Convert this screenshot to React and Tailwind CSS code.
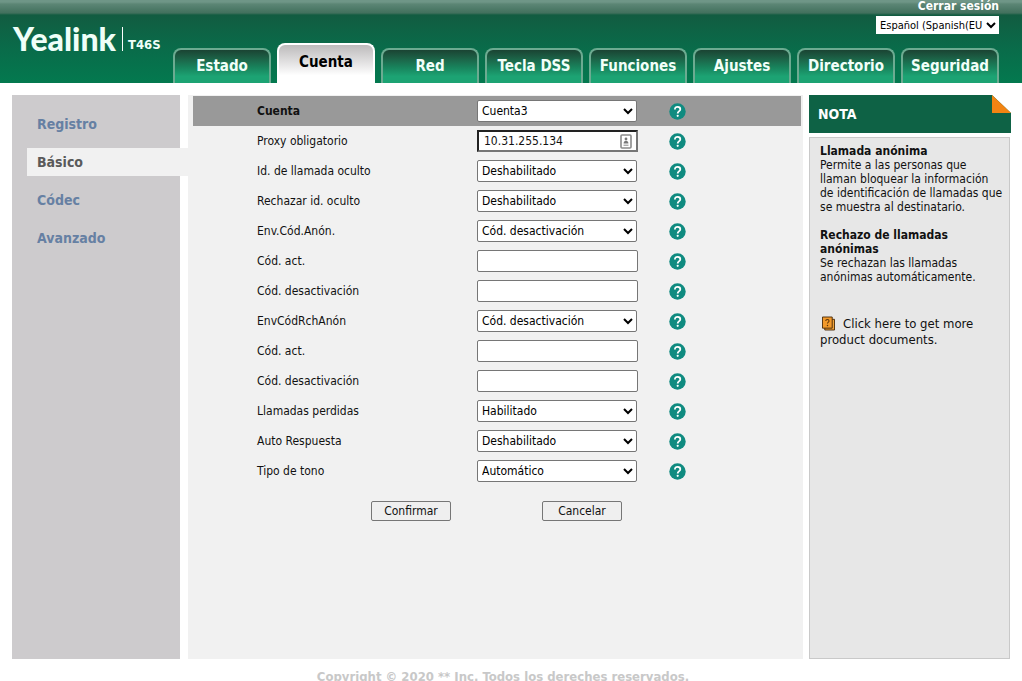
import React, { useState } from 'react';
import clsx from 'clsx';

const tabs = ['Estado', 'Cuenta', 'Red', 'Tecla DSS', 'Funciones', 'Ajustes', 'Directorio', 'Seguridad'];

const menu = ['Registro', 'Básico', 'Códec', 'Avanzado'];

const onOff = ['Deshabilitado', 'Habilitado'];
const codeOptions = ['Cód. desactivación', 'Cód. activación'];

const fields = [
  { id: 'proxy', label: 'Proxy obligatorio', type: 'proxy', value: '10.31.255.134' },
  { id: 'hideId', label: 'Id. de llamada oculto', options: onOff, value: 'Deshabilitado' },
  { id: 'rejectId', label: 'Rechazar id. oculto', options: onOff, value: 'Deshabilitado' },
  { id: 'sendAnon', label: 'Env.Cód.Anón.', options: codeOptions, value: 'Cód. desactivación' },
  { id: 'anonOn', label: 'Cód. act.', type: 'text', value: '' },
  { id: 'anonOff', label: 'Cód. desactivación', type: 'text', value: '' },
  { id: 'sendReject', label: 'EnvCódRchAnón', options: codeOptions, value: 'Cód. desactivación' },
  { id: 'rejectOn', label: 'Cód. act.', type: 'text', value: '' },
  { id: 'rejectOff', label: 'Cód. desactivación', type: 'text', value: '' },
  { id: 'missed', label: 'Llamadas perdidas', options: onOff, value: 'Habilitado' },
  { id: 'autoAnswer', label: 'Auto Respuesta', options: onOff, value: 'Deshabilitado' },
  { id: 'ringTone', label: 'Tipo de tono', options: ['Automático', 'Común'], value: 'Automático' },
];

const HelpIcon = () => (
  <svg width="17" height="17" viewBox="0 0 17 17" aria-hidden="true">
    <circle cx="8.5" cy="8.5" r="8.2" fill="#108b80" />
    <path
      d="M5.9 6.4C5.9 4.7 7 3.8 8.6 3.8s2.7.9 2.7 2.4c0 1.1-.6 1.6-1.4 2.2-.8.6-1.2 1-1.2 2"
      fill="none"
      stroke="#fff"
      strokeWidth="1.8"
    />
    <circle cx="8.7" cy="12.8" r="1.1" fill="#fff" />
  </svg>
);

// Small card icon at the end of the proxy box
const CardIcon = () => (
  <svg className="ml-auto shrink-0" width="12" height="15" viewBox="0 0 12 15" aria-hidden="true">
    <rect x="1" y="1" width="10" height="13" rx="1" fill="#fff" stroke="#8a8a8a" strokeWidth="1.6" />
    <circle cx="6" cy="5" r="1.4" fill="#777" />
    <path d="M3.6 9.5c0-1.8 1-2.8 2.4-2.8s2.4 1 2.4 2.8z" fill="#777" />
    <path d="M3.5 11.2h5" stroke="#888" />
  </svg>
);

const DocsIcon = () => (
  <svg className="mx-0.5 mr-2 inline-block align-text-bottom" width="13" height="15" viewBox="0 0 14 15" aria-hidden="true">
    <path d="M3 3h10.5v11.5H3z" fill="#f2a33a" stroke="#4a2a08" />
    <path d="M.5.5h10.5v12H.5z" fill="#f39a2b" stroke="#4a2a08" />
    <path d="M4 4.8c0-1 .7-1.6 1.8-1.6s1.8.6 1.8 1.5c0 1.3-1.7 1.4-1.7 2.9" fill="none" stroke="#5c3407" strokeWidth="1.1" />
    <circle cx="5.9" cy="9.7" r=".8" fill="#5c3407" />
  </svg>
);

const Select = ({ id, options, value, onChange }) => (
  <select
    id={id}
    value={value}
    onChange={(e) => onChange(e.target.value)}
    className="h-[22px] w-40 rounded-xs border border-[#767676] bg-white text-xs text-black"
  >
    {options.map((option) => (
      <option key={option}>{option}</option>
    ))}
  </select>
);

const Row = ({ id, label, header, children }) => (
  <div className={clsx('mr-0.5 ml-[5px] flex h-[30px] items-center pl-16', header && 'bg-[#999]')}>
    <label htmlFor={id} className={clsx('w-55', header && 'font-bold')}>
      {label}
    </label>
    <div className="flex w-48">{children}</div>
    <button type="button" aria-label={`Ayuda: ${label}`}>
      <HelpIcon />
    </button>
  </div>
);

const Header = () => (
  <header className="flex h-[83px] justify-between bg-[linear-gradient(#6f9687_0px,#6f9687_2px,#5c8675_4px,#42705d_13px,#125c41_15px,#0a6a49_45px,#03794f_83px)] pr-[23px]">
    <div className="flex items-start pt-6 pl-[13px] text-[#effff8]">
      <span className="font-[family-name:Lato,sans-serif] text-[32px] leading-[30px] font-black">Yealink</span>
      <span className="mt-[3px] ml-1.5 h-6 w-px bg-white" />
      <span className="mt-[13px] ml-[5px] text-[13px] leading-4 font-bold">T46S</span>
    </div>
    <div className="flex flex-col justify-between">
      <div className="flex flex-col items-end gap-1">
        <a href="#logout" className="text-xs leading-3 font-bold text-white">
          Cerrar sesión
        </a>
        <select aria-label="Idioma" className="h-[18px] w-[123px] bg-white text-[11px] text-black">
          <option>Español (Spanish(EU</option>
          <option>English</option>
        </select>
      </div>
      <nav className="flex items-end gap-1.5">
        {tabs.map((tab) => (
          <a
            key={tab}
            href={`#${tab}`}
            className={clsx(
              'flex w-[98px] justify-center rounded-t-lg border-2 border-b-0 text-[15px] font-bold',
              tab === 'Cuenta'
                ? 'h-10 border-white bg-linear-to-b from-[#bdbbbc] to-white to-80% pt-2 text-black'
                : 'h-[35px] border-[#6cab91] bg-linear-to-b from-[#1a4433] via-[#18805a] to-[#1ca373] to-80% pt-[7px] text-[#f2fff9]'
            )}
          >
            {tab}
          </a>
        ))}
      </nav>
    </div>
  </header>
);

const Sidebar = () => (
  <nav className="flex w-42 shrink-0 flex-col gap-2.5 bg-[#cdcbcd] pt-[15px] pl-[15px]">
    {menu.map((item) => (
      <a
        key={item}
        href={`#${item}`}
        className={clsx(
          'h-7 pl-2.5 text-sm leading-7 font-bold',
          item === 'Básico' ? '-mr-2 bg-[#f1f1f1] text-[#5a5a5a]' : 'text-[#6680a3]'
        )}
      >
        {item}
      </a>
    ))}
  </nav>
);

const Notes = () => (
  <aside className="flex w-[202px] shrink-0 flex-col gap-1">
    <div className="flex h-[38px] items-start justify-between bg-[#0e6245] pl-[9px]">
      <h2 className="text-sm leading-[38px] font-bold text-white">NOTA</h2>
      <svg width="19" height="18" viewBox="0 0 19 18" aria-hidden="true">
        <path d="M0 0h19v18z" fill="#fff" />
        <path d="M0 0l19 18H0z" fill="#f28413" />
      </svg>
    </div>
    <div className="mr-px grow border border-[#c9c9c9] bg-[#e7e7e7] pt-1.5 pr-1 pl-2.5 leading-[14px]">
      <h3 className="pr-8 font-bold">Llamada anónima</h3>
      <p>Permite a las personas que llaman bloquear la información de identificación de llamadas que se muestra al destinatario.</p>
      <h3 className="mt-3.5 pr-8 font-bold">Rechazo de llamadas anónimas</h3>
      <p className="pr-2">Se rechazan las llamadas anónimas automáticamente.</p>
      <a href="#docs" className="mt-8 block text-[13px] leading-4">
        <DocsIcon />
        Click here to get more product documents.
      </a>
    </div>
  </aside>
);

const App = () => {
  const [account, setAccount] = useState('Cuenta3');
  const [values, setValues] = useState(() => Object.fromEntries(fields.map((f) => [f.id, f.value])));

  const update = (id, value) => setValues((prev) => ({ ...prev, [id]: value }));

  return (
    <div className="bg-white font-['DejaVu_Sans_Condensed','Noto_Sans',sans-serif] text-xs text-[#111]">
      <Header />
      <div className="flex min-h-[576px] pt-3 pr-[11px] pl-3">
        <Sidebar />
        <form className="mr-1.5 ml-2 flex-1 bg-[#f1f1f1] pt-px" onSubmit={(e) => e.preventDefault()}>
          <Row id="account" label="Cuenta" header>
            <Select id="account" options={['Cuenta1', 'Cuenta2', 'Cuenta3']} value={account} onChange={setAccount} />
          </Row>
          {fields.map((field) => (
            <Row key={field.id} id={field.id} label={field.label}>
              {field.options && (
                <Select
                  id={field.id}
                  options={field.options}
                  value={values[field.id]}
                  onChange={(value) => update(field.id, value)}
                />
              )}
              {field.type === 'text' && (
                <input
                  id={field.id}
                  type="text"
                  value={values[field.id]}
                  onChange={(e) => update(field.id, e.target.value)}
                  className="h-[22px] w-[161px] rounded-xs border border-[#767676] bg-white px-1"
                />
              )}
              {field.type === 'proxy' && (
                <div className="flex h-[22px] w-[161px] items-center border-2 border-t-[#222] border-r-[#767676] border-b-[#767676] border-l-[#222] bg-white pr-1 pl-[5px]">
                  <input
                    id={field.id}
                    type="text"
                    value={values[field.id]}
                    onChange={(e) => update(field.id, e.target.value)}
                    className="w-full min-w-0 outline-none"
                  />
                  <CardIcon />
                </div>
              )}
            </Row>
          ))}
          <div className="mt-[15px] ml-[183px] flex gap-[91px]">
            <button type="submit" className="h-5 w-20 rounded-xs border border-[#767676] bg-[#efefef]">
              Confirmar
            </button>
            <button type="button" className="h-5 w-20 rounded-xs border border-[#767676] bg-[#efefef]">
              Cancelar
            </button>
          </div>
        </form>
        <Notes />
      </div>
      <footer className="pt-2.5 pr-4 text-center text-[13px] leading-4 font-bold text-[#c8c8c8]">
        Copyright © 2020 ** Inc. Todos los dereches reservados.
      </footer>
    </div>
  );
};

export default App;
